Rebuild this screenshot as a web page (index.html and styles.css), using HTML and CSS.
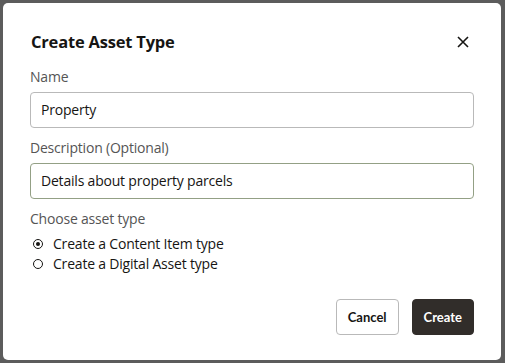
FILE: index.html
```html
<!DOCTYPE html>
<html lang="en">
<head>
    <meta charset="UTF-8">
    <title>Create Asset Type</title>
    <link rel="stylesheet" href="styles.css">
</head>
<body>
    <div class="dialog">
        <div class="dialog-header">
            <h1>Create Asset Type</h1>
            <button class="close" aria-label="Close">
                <svg width="12" height="12" viewBox="0 0 12 12"><path d="M1 1L11 11M11 1L1 11" stroke="#161513" stroke-width="1.6" fill="none"/></svg>
            </button>
        </div>

        <label class="field-label first">Name</label>
        <div class="input">Property</div>

        <label class="field-label">Description (Optional)</label>
        <div class="input focused">Details about property parcels</div>

        <div class="field-label">Choose asset type</div>
        <div class="radios">
            <div class="radio checked"><span class="dot"></span>Create a Content Item type</div>
            <div class="radio"><span class="dot"></span>Create a Digital Asset type</div>
        </div>

        <div class="actions">
            <button class="btn">Cancel</button>
            <button class="btn primary">Create</button>
        </div>
    </div>
</body>
</html>
```

FILE: styles.css
```css
body {
    margin: 0;
    background: #5c5c5c;
    font-family: "Open Sans", Lato, sans-serif;
    color: #161513;
}
.dialog {
    margin: 3px;
    width: 498px;
    height: 357px;
    box-sizing: border-box;
    background: #fff;
    border-radius: 5px;
    padding: 27px 27px 0 27px;
}
.dialog-header {
    display: flex;
    justify-content: space-between;
    align-items: center;
    height: 24px;
}
h1 {
    margin: 0 0 0 1px;
    font-size: 16.5px;
    font-weight: 700;
    line-height: 24px;
    letter-spacing: -0.2px;
}
.close {
    border: 0;
    background: none;
    padding: 0;
    margin-right: 5px;
    width: 12px;
    height: 12px;
    display: flex;
}
.field-label {
    display: block;
    font-size: 14px;
    line-height: 20px;
    color: #555;
    letter-spacing: -0.2px;
}
.field-label.first {
    margin-top: 13px;
}
.input {
    margin-top: 5px;
    height: 36px;
    box-sizing: border-box;
    border: 1px solid #b9b9b9;
    border-radius: 4px;
    padding: 0 10px;
    font-size: 14px;
    line-height: 34px;
    color: #161513;
    letter-spacing: -0.2px;
}
.input.focused {
    border-color: #93a085;
}
.input + .field-label {
    margin-top: 10px;
}
.radios {
    margin-top: 5px;
}
.radio {
    display: flex;
    align-items: center;
    font-size: 14px;
    line-height: 20px;
    color: #161513;
    letter-spacing: -0.2px;
}
.dot {
    width: 10px;
    height: 10px;
    box-sizing: border-box;
    border: 1.5px solid #161513;
    border-radius: 50%;
    margin: 0 10px 0 3px;
    position: relative;
}
.radio.checked .dot::after {
    content: "";
    position: absolute;
    left: 1.5px;
    top: 1.5px;
    width: 4px;
    height: 4px;
    border-radius: 50%;
    background: #161513;
}
.actions {
    display: flex;
    justify-content: flex-end;
    gap: 13px;
    margin-top: 25px;
}
.btn {
    height: 36px;
    padding: 0 11px;
    font-family: Lato, "Open Sans", sans-serif;
    font-size: 13px;
    font-weight: 700;
    border: 1px solid #b9b9b9;
    border-radius: 4px;
    background: #fff;
    color: #161513;
}
.btn.primary {
    background: #312d2a;
    border-color: #312d2a;
    color: #fff;
}
```
